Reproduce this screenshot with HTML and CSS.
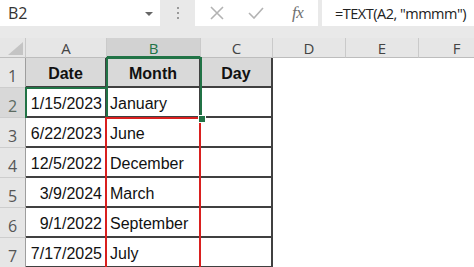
FILE: index.html
```html
<!DOCTYPE html>
<html>
<head>
<meta charset="utf-8">
<link rel="stylesheet" href="styles.css">
</head>
<body>
<div class="app">
  <div class="toolbar">
    <div class="namebox">
      <span class="nb-text">B2</span>
      <svg class="nb-arrow" width="8" height="4" viewBox="0 0 8 4"><polygon points="0,0 8,0 4,4" fill="#666"/></svg>
    </div>
    <div class="grip"><i></i><i></i><i></i></div>
    <div class="fxbox">
      <svg class="ic-x" width="14" height="14" viewBox="0 0 14 14"><path d="M1 1 L13 13 M13 1 L1 13" stroke="#b3b3b3" stroke-width="1.6" fill="none"/></svg>
      <svg class="ic-check" width="16" height="12" viewBox="0 0 16 12"><path d="M1 6 L6 11 L15 1" stroke="#b3b3b3" stroke-width="1.6" fill="none"/></svg>
      <span class="ic-fx">fx</span>
    </div>
    <div class="formula">=TEXT(A2, "mmmm")</div>
  </div>
  <div class="sheet">
    <div class="corner"><svg width="15" height="13" viewBox="0 0 15 13"><polygon points="15,0 15,13 0,13" fill="#c4c4c4"/></svg></div>
    <div class="colh">A</div>
    <div class="colh sel">B</div>
    <div class="colh">C</div>
    <div class="colh">D</div>
    <div class="colh">E</div>
    <div class="colh">F</div>

    <div class="rowh">1</div>
    <div class="cell th">Date</div>
    <div class="cell th">Month</div>
    <div class="cell th">Day</div>
    <div class="blank"></div><div class="blank"></div><div class="blank"></div>

    <div class="rowh selrow">2</div>
    <div class="cell num">1/15/2023</div>
    <div class="cell">January</div>
    <div class="cell"></div>
    <div class="blank"></div><div class="blank"></div><div class="blank"></div>

    <div class="rowh">3</div>
    <div class="cell num">6/22/2023</div>
    <div class="cell">June</div>
    <div class="cell"></div>
    <div class="blank"></div><div class="blank"></div><div class="blank"></div>

    <div class="rowh">4</div>
    <div class="cell num">12/5/2022</div>
    <div class="cell">December</div>
    <div class="cell"></div>
    <div class="blank"></div><div class="blank"></div><div class="blank"></div>

    <div class="rowh">5</div>
    <div class="cell num">3/9/2024</div>
    <div class="cell">March</div>
    <div class="cell"></div>
    <div class="blank"></div><div class="blank"></div><div class="blank"></div>

    <div class="rowh">6</div>
    <div class="cell num">9/1/2022</div>
    <div class="cell">September</div>
    <div class="cell"></div>
    <div class="blank"></div><div class="blank"></div><div class="blank"></div>

    <div class="rowh">7</div>
    <div class="cell num">7/17/2025</div>
    <div class="cell">July</div>
    <div class="cell"></div>
    <div class="blank"></div><div class="blank"></div><div class="blank"></div>

    <div class="sel-b"></div>
    <div class="sel-a"></div>
    <div class="red-box"></div>
    <div class="handle"></div>
  </div>
</div>
</body>
</html>
```

FILE: styles.css
```css
html, body {
  margin: 0;
  padding: 0;
  background: #ffffff;
  overflow: hidden;
}
.app {
  width: 474px;
  height: 267px;
  overflow: hidden;
  background: #ffffff;
}
.toolbar {
  display: flex;
  height: 26px;
  padding-bottom: 12px;
  background: #e9e9e9;
}
.namebox {
  width: 160px;
  background: #ffffff;
  display: flex;
  align-items: center;
  justify-content: space-between;
  padding: 0 7px 0 8px;
  box-sizing: border-box;
  font-family: "Open Sans", sans-serif;
  font-size: 16px;
  color: #333;
}
.nb-arrow { display: block; margin-top: 1px; }
.grip {
  width: 35px;
  display: flex;
  flex-direction: column;
  align-items: center;
  justify-content: center;
  gap: 3px;
}
.grip i {
  display: block;
  width: 2px;
  height: 2px;
  background: #9a9a9a;
}
.fxbox {
  width: 123px;
  background: #ffffff;
  display: flex;
  align-items: center;
}
.ic-x { margin-left: 15px; }
.ic-check { margin-left: 24px; }
.ic-fx {
  margin-left: 28px;
  font-family: "Liberation Serif", serif;
  font-style: italic;
  font-size: 17px;
  color: #707070;
  letter-spacing: -0.5px;
}
.formula {
  margin-left: 4px;
  flex: 1;
  background: #ffffff;
  display: flex;
  align-items: center;
  padding-left: 13px;
  font-family: "Open Sans", sans-serif;
  font-size: 14.5px;
  letter-spacing: -0.5px;
  color: #222;
  white-space: nowrap;
  overflow: hidden;
}
.sheet {
  position: relative;
  display: grid;
  grid-template-columns: 26px 81px 94px 72px 73px 73px 76px;
  grid-template-rows: 20px repeat(7, 30px);
  width: 495px;
}
.corner {
  background: #e6e6e6;
  border-right: 1px solid #c8c8c8;
  border-bottom: 1px solid #bdbdbd;
  box-sizing: border-box;
  display: flex;
  align-items: flex-end;
  justify-content: flex-end;
  padding: 0 2px 2px 0;
}
.corner svg { display: block; }
.colh {
  background: #e6e6e6;
  border-right: 1px solid #cacaca;
  border-bottom: 1px solid #bdbdbd;
  box-sizing: border-box;
  display: flex;
  align-items: center;
  justify-content: center;
  font-family: "Open Sans", sans-serif;
  font-size: 15px;
  color: #444;
  padding-top: 1px;
}
.colh.sel {
  background: #d2d2d2;
  color: #217346;
  border-bottom: 2px solid #217346;
}
.rowh {
  background: #e6e6e6;
  border-right: 1px solid #9e9e9e;
  border-bottom: 1px solid #cdcdcd;
  box-sizing: border-box;
  display: flex;
  align-items: flex-end;
  justify-content: center;
  padding-bottom: 0;
  font-family: "Open Sans", sans-serif;
  font-size: 16px;
  color: #555;
}
.rowh.selrow {
  background: #d8d8d8;
  color: #5c6b62;
}
.cell {
  background: #ffffff;
  border-right: 2px solid #404040;
  border-bottom: 2px solid #404040;
  box-sizing: border-box;
  display: flex;
  align-items: center;
  padding: 4px 3px 0 3px;
  font-family: "Liberation Sans", Arial, sans-serif;
  font-size: 16px;
  color: #111;
  white-space: nowrap;
}
.cell.num { justify-content: flex-end; }
.cell.th {
  background: #d9d9d9;
  justify-content: center;
  font-weight: bold;
}
.blank { background: #ffffff; }
.sel-b {
  position: absolute;
  left: 106px;
  top: 19px;
  width: 96px;
  height: 62px;
  border: 2px solid #217346;
  box-sizing: border-box;
  pointer-events: none;
}
.sel-a {
  position: absolute;
  left: 25px;
  top: 49px;
  width: 83px;
  height: 31px;
  border-top: 2px solid #217346;
  border-left: 2px solid #217346;
  box-sizing: border-box;
}
.red-box {
  position: absolute;
  left: 105px;
  top: 79px;
  width: 96px;
  height: 200px;
  border: 2px solid #d9201f;
  box-sizing: border-box;
}
.handle {
  position: absolute;
  left: 198px;
  top: 77px;
  width: 6px;
  height: 6px;
  background: #217346;
  border: 1px solid #ffffff;
}
```
